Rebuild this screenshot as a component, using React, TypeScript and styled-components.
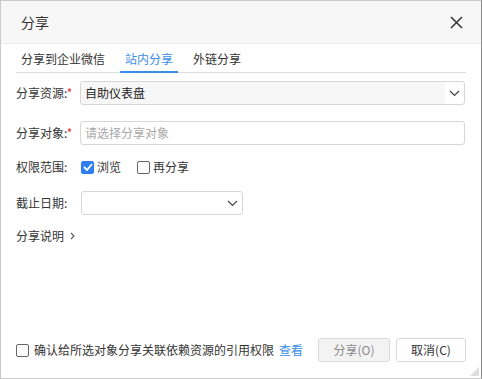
import styled, { createGlobalStyle } from 'styled-components';

const GlobalStyle = createGlobalStyle`
  html, body {
    margin: 0;
    padding: 0;
    background: #ffffff;
  }
  body {
    font-family: "Noto Sans CJK SC", "Noto Sans", "Liberation Sans", sans-serif;
    font-size: 12px;
    color: #333333;
  }
  * {
    box-sizing: border-box;
  }
`;

const Dialog = styled.div`
  width: 482px;
  height: 379px;
  display: flex;
  flex-direction: column;
  position: relative;
  border: 1px solid #c9c9c9;
  border-right-color: #8a8a8a;
  background: #ffffff;
`;

const Header = styled.div`
  height: 43px;
  flex-shrink: 0;
  display: flex;
  align-items: center;
  justify-content: space-between;
  padding: 0 17px 0 20px;
  background: #f7f7f7;
  border-bottom: 1px solid #ececec;
`;

const Title = styled.span`
  font-size: 14px;
  line-height: 20px;
  color: #333333;
`;

const CloseButton = styled.button`
  width: 16px;
  height: 16px;
  padding: 0;
  border: none;
  background: none;
  display: flex;
  align-items: center;
  justify-content: center;
`;

const TabBar = styled.div`
  margin: 0 15px 0 15px;
  height: 29px;
  display: flex;
  gap: 10px;
  border-bottom: 1px solid #dcdcdc;
`;

const Tab = styled.div<{ $active?: boolean }>`
  padding: 0 5px;
  display: flex;
  align-items: center;
  font-size: 12px;
  line-height: 16px;
  color: ${({ $active }) => ($active ? '#3a8ee6' : '#333333')};
  border-bottom: 2px solid ${({ $active }) => ($active ? '#3a8ee6' : 'transparent')};
  margin-bottom: -1px;
  padding-top: 2px;
`;

const Form = styled.div`
  padding: 0 16px 0 15px;
  display: flex;
  flex-direction: column;
`;

const Row = styled.div<{ $mt: number }>`
  height: 24px;
  margin-top: ${({ $mt }) => $mt}px;
  display: flex;
  align-items: center;
`;

const Label = styled.span`
  width: 64px;
  flex-shrink: 0;
  font-size: 12px;
  line-height: 16px;
  color: #333333;
  white-space: nowrap;
`;

const Required = styled.span`
  color: #e0332c;
`;

const Field = styled.div<{ $width?: number; $muted?: boolean }>`
  height: 24px;
  width: ${({ $width }) => ($width ? `${$width}px` : 'auto')};
  flex: ${({ $width }) => ($width ? '0 0 auto' : '1')};
  display: flex;
  align-items: center;
  border: 1px solid #d6d6d6;
  border-radius: 3px;
  background: #ffffff;
  overflow: hidden;
`;

const FieldText = styled.span<{ $placeholder?: boolean; $muted?: boolean }>`
  flex: 1;
  height: 100%;
  display: flex;
  align-items: center;
  padding-left: 4px;
  font-size: 12px;
  line-height: 16px;
  color: ${({ $placeholder }) => ($placeholder ? '#a8a8a8' : '#222222')};
  background: ${({ $muted }) => ($muted ? '#f7f7f7' : 'transparent')};
`;

const Arrow = styled.span`
  width: 18px;
  height: 100%;
  display: flex;
  align-items: center;
  justify-content: center;
  margin-right: 1px;
`;

const CheckGroup = styled.div`
  display: flex;
  align-items: center;
  margin-left: 1px;
  gap: 16px;
`;

const CheckItem = styled.label`
  display: flex;
  align-items: center;
  gap: 3px;
  font-size: 12px;
  line-height: 16px;
  color: #333333;
`;

const Box = styled.span<{ $checked?: boolean }>`
  width: 13px;
  height: 13px;
  border-radius: 2px;
  display: flex;
  align-items: center;
  justify-content: center;
  border: 1px solid ${({ $checked }) => ($checked ? '#2f7ff0' : '#666666')};
  background: ${({ $checked }) => ($checked ? '#2f7ff0' : '#ffffff')};
`;

const Expander = styled.div`
  display: flex;
  align-items: center;
  gap: 6px;
  font-size: 12px;
  line-height: 16px;
  color: #333333;
`;

const Spacer = styled.div`
  flex: 1;
`;

const Footer = styled.div`
  padding: 0 15px 16px 15px;
  display: flex;
  align-items: center;
  justify-content: space-between;
`;

const Confirm = styled.div`
  display: flex;
  align-items: center;
  gap: 5px;
  font-size: 12px;
  line-height: 16px;
  color: #333333;
`;

const Link = styled.span`
  color: #3a8ee6;
`;

const Buttons = styled.div`
  display: flex;
  gap: 6px;
`;

const Button = styled.button<{ $disabled?: boolean; $width: number }>`
  width: ${({ $width }) => $width}px;
  height: 24px;
  padding: 0;
  border: 1px solid #dadada;
  border-radius: 3px;
  font-family: inherit;
  font-size: 12px;
  line-height: 16px;
  color: ${({ $disabled }) => ($disabled ? '#8a8a8a' : '#333333')};
  background: ${({ $disabled }) => ($disabled ? '#f3f3f3' : '#ffffff')};
`;

const Grip = styled.svg`
  position: absolute;
  right: 2px;
  bottom: 2px;
`;

const Chevron = () => (
  <svg width="11" height="7" viewBox="0 0 11 7">
    <path d="M1 1 L5.5 5.5 L10 1" fill="none" stroke="#444" strokeWidth="1.2" />
  </svg>
);

const App = () => {
  return (
    <>
      <GlobalStyle />
      <Dialog>
        <Header>
          <Title>分享</Title>
          <CloseButton aria-label="关闭">
            <svg width="13" height="13" viewBox="0 0 13 13">
              <path d="M1 1 L12 12 M12 1 L1 12" stroke="#333" strokeWidth="1.5" />
            </svg>
          </CloseButton>
        </Header>
        <TabBar>
          <Tab>分享到企业微信</Tab>
          <Tab $active>站内分享</Tab>
          <Tab>外链分享</Tab>
        </TabBar>
        <Form>
          <Row $mt={8}>
            <Label>
              分享资源:<Required>*</Required>
            </Label>
            <Field>
              <FieldText $muted>自助仪表盘</FieldText>
              <Arrow>
                <Chevron />
              </Arrow>
            </Field>
          </Row>
          <Row $mt={16}>
            <Label>
              分享对象:<Required>*</Required>
            </Label>
            <Field>
              <FieldText $placeholder>请选择分享对象</FieldText>
            </Field>
          </Row>
          <Row $mt={10}>
            <Label>权限范围:</Label>
            <CheckGroup>
              <CheckItem>
                <Box $checked>
                  <svg width="10" height="8" viewBox="0 0 10 8">
                    <path d="M1 4 L4 7 L9 1" fill="none" stroke="#fff" strokeWidth="1.8" />
                  </svg>
                </Box>
                浏览
              </CheckItem>
              <CheckItem>
                <Box />
                再分享
              </CheckItem>
            </CheckGroup>
          </Row>
          <Row $mt={12}>
            <Label>截止日期:</Label>
            <Field $width={162} style={{ marginLeft: 1 }}>
              <FieldText />
              <Arrow>
                <Chevron />
              </Arrow>
            </Field>
          </Row>
          <Row $mt={9}>
            <Expander>
              分享说明
              <svg width="5" height="8" viewBox="0 0 5 8">
                <path d="M1 1 L4 4 L1 7" fill="none" stroke="#555" strokeWidth="1.1" />
              </svg>
            </Expander>
          </Row>
        </Form>
        <Spacer />
        <Footer>
          <Confirm>
            <Box />
            确认给所选对象分享关联依赖资源的引用权限
            <Link>查看</Link>
          </Confirm>
          <Buttons>
            <Button $disabled $width={72}>
              分享(O)
            </Button>
            <Button $width={70}>取消(C)</Button>
          </Buttons>
        </Footer>
        <Grip width="9" height="9" viewBox="0 0 9 9">
          <path d="M9 0 L9 9 L0 9 Z" fill="#dedede" />
        </Grip>
      </Dialog>
    </>
  );
};

export default App;
